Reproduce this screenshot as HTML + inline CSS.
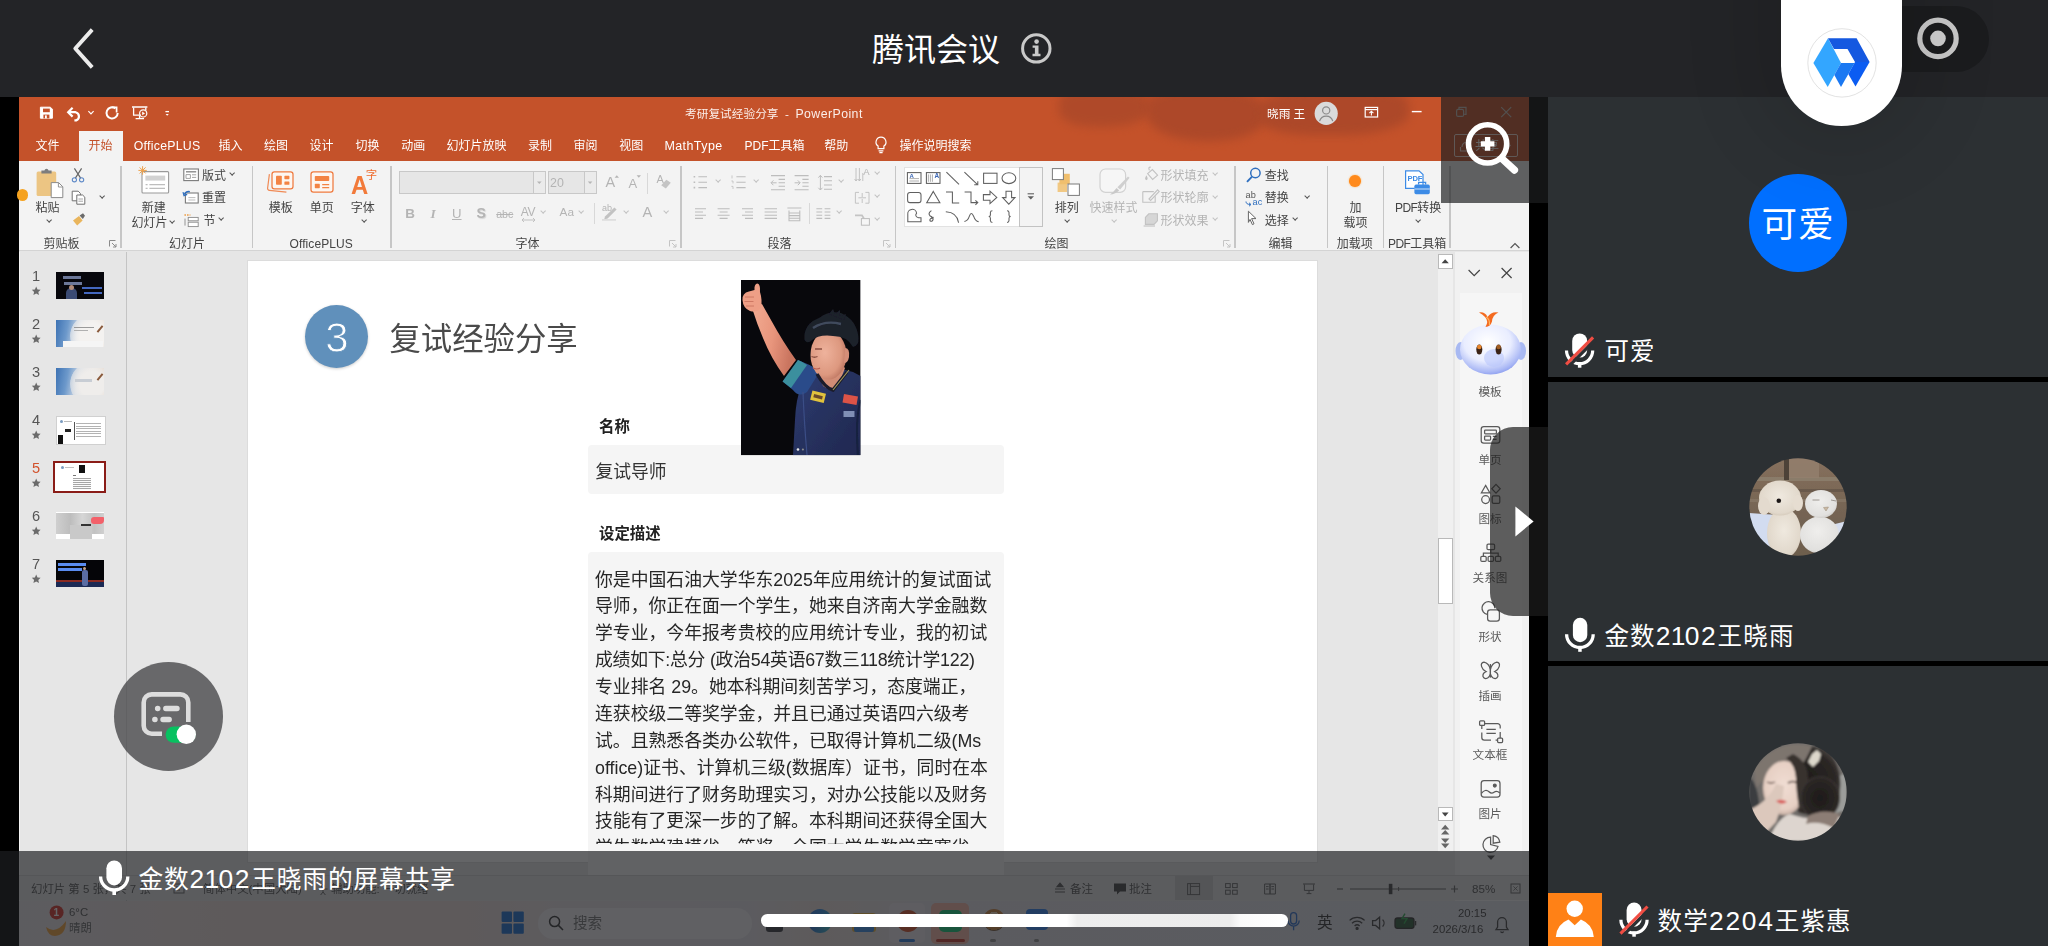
<!DOCTYPE html>
<html lang="zh-CN">
<head>
<meta charset="utf-8">
<title>腾讯会议</title>
<style>
html,body{margin:0;padding:0;background:#000;overflow:hidden;}
html{width:2048px;height:946px;}
body{width:2048px;height:946px;position:relative;overflow:hidden;font-family:"Liberation Sans","Noto Sans CJK SC",sans-serif;color:#fff;}
.a{position:absolute;}
.a,svg{box-sizing:border-box;}
.t{position:absolute;white-space:nowrap;line-height:1;}
svg{position:absolute;overflow:visible;}
/* top bar */
#topbar{left:0;top:0;width:2048px;height:97px;background:#232427;}
/* ppt */
#ppt{left:19px;top:97px;width:1510px;height:849px;background:#e6e6e6;overflow:hidden;color:#333;font-size:11.5px;filter:blur(0.35px);}
#ppt .t{color:#3b3b3b;}
.tab{position:absolute;top:43.4px;color:#fff !important;font-size:12px;white-space:nowrap;line-height:1;}
.sep{position:absolute;top:8px;width:1px;height:82px;background:#c9c9c9;}
.gl{position:absolute;top:79px;font-size:11.5px;color:#444;white-space:nowrap;line-height:1;}
.dis{color:#b4b4b4 !important;}
#rib{left:0;top:63.5px;width:1510px;height:90.5px;background:#f3f3f3;border-bottom:1px solid #d4d4d4;}
#rib .t{font-size:12px;color:#444;padding-top:0.500px;}
#rib .t.dis{color:#b9b9b9;}
.cv{position:absolute;width:3.3px;height:3.3px;border-right:1.25px solid #555;border-bottom:1.25px solid #555;transform:rotate(45deg);}
.cv.dis{border-color:#c2c2c2;}
.sep{position:absolute;top:5px;width:1.2px;height:82.5px;background:#c6c6c6;}
.tsep{position:absolute;width:1px;height:21px;background:#d8d8d8;}
.lau{position:absolute;top:79.5px;width:8px;height:8px;}
.th{position:absolute;left:36.6px;width:48.4px;height:27.4px;overflow:hidden;}
.tn{position:absolute;left:11px;width:12px;text-align:center;font-size:14.600px;color:#555;line-height:1;}
.ts{position:absolute;left:12.6px;width:9px;height:9px;}
.pl{position:absolute;width:72px;left:1435px;text-align:center;font-size:11.600px;color:#5a5a5a;line-height:1;white-space:nowrap;}
#slide .t{color:#2b2b2b;}
/* right panel */
.tile{position:absolute;left:1548px;width:500px;background:#2c3033;}
.nm{position:absolute;white-space:nowrap;line-height:1;color:#fff;font-size:25px;letter-spacing:0.6px;}
</style>
</head>
<body>
<!-- ===== TOP BAR ===== -->
<div id="topbar" class="a">
  <svg style="left:60px;top:20px" width="50" height="60" viewBox="60 20 50 60"><path d="M92.2 29.6 L75.3 48.5 L92.2 67.4" fill="none" stroke="#ececec" stroke-width="3.9" stroke-linejoin="round"/></svg>
  <div class="t" style="left:872px;top:34.300px;font-size:32px;color:#fff;">腾讯会议</div>
  <svg style="left:1018px;top:30px" width="36" height="36" viewBox="0 0 36 36"><circle cx="18.3" cy="18.4" r="13.7" fill="none" stroke="#c9c9c9" stroke-width="3"/><circle cx="18.6" cy="11.6" r="2.3" fill="#c9c9c9"/><path d="M14.6 15.4h5.9v8.4h2v2.4h-8v-2.4h2.4v-6h-2.3z" fill="#c9c9c9"/></svg>
  <!-- record pill -->
  <div class="a" style="left:1860px;top:6px;width:129px;height:66px;border-radius:33px;background:#1b1c1e;"></div>
  <svg style="left:1914px;top:15px" width="48" height="48" viewBox="0 0 48 48"><circle cx="24" cy="23.4" r="18.2" fill="none" stroke="#c9c9c9" stroke-width="5.2"/><circle cx="24" cy="23.4" r="7.8" fill="#cfcfcf"/></svg>
</div>
<!-- ===== SHARED SCREEN : PowerPoint window (origin 19,97) ===== -->
<div id="ppt" class="a">
  <!-- title bar + tab strip -->
  <div class="a" style="left:0;top:0;width:1510px;height:63.5px;background:#c4522a;"></div>
  <div class="a" style="left:1040px;top:-8px;width:92px;height:38px;background:#aa4829;border-radius:30% 40% 50% 40%;filter:blur(5px);opacity:0.800;"></div>
  <div class="a" style="left:1128px;top:-8px;width:118px;height:52px;background:#a94729;border-radius:30% 40% 45% 50%;filter:blur(5px);opacity:0.850;"></div>
  <div class="a" style="left:1240px;top:-8px;width:150px;height:46px;background:#a94729;border-radius:40% 30% 45% 35%;filter:blur(5px);opacity:0.850;"></div>
  <!-- quick access toolbar -->
  <svg style="left:18px;top:6px" width="140" height="22" viewBox="18 6 140 22" fill="none" stroke="#fff" stroke-width="1.5">
    <path d="M21.400 10.200h10l2 2v9h-12z" fill="#fff" stroke-width="1"/><rect x="24" y="11.600" width="6.800" height="3.600" fill="#c4522a" stroke="none"/><rect x="24.400" y="17.600" width="6" height="3.800" fill="#c4522a" stroke="none"/><rect x="26" y="18.400" width="1.800" height="3" fill="#fff" stroke="none"/>
    <path d="M53.600 10.800l-4.400 4.400l4.400 4.400" stroke-width="2.200"/><path d="M49.600 15.200h7a4.300 4.300 0 0 1 0.600 8.200h-1.800" stroke-width="2.200"/>
    <path d="M69.4 14.2l2.6 2.6l2.6 -2.6" stroke-width="1.2"/>
    <path d="M96.4 11.4a5.6 5.6 0 1 0 2.3 4.6" stroke-width="2"/><path d="M92.6 10.4h5v5" stroke-width="1.7"/>
    <path d="M113 10h15.4" stroke-width="1.5"/><path d="M114.6 10.6v7.6h7.4M126.8 10.6v3" stroke-width="1.3"/><circle cx="124.2" cy="16.4" r="3.6" stroke-width="1.2"/><path d="M123.2 14.6v3.6l2.8 -1.8z" fill="#fff" stroke="none"/><path d="M120.6 18.6v2.4M116.6 21.6h8.4" stroke-width="1.4"/>
    <path d="M146.4 14.6h3.6" stroke-width="1.3"/><path d="M146.6 17l1.6 1.8l1.6 -1.8z" fill="#fff" stroke="none"/>
  </svg>
  <div class="t" style="left:666px;top:10.5px;font-size:11.7px;color:#fbeee9 !important;color:#fbeee9;"><span style="color:#fbeee9">考研复试经验分享&nbsp; -&nbsp; <span style="font-size:12.300px;letter-spacing:0.450px;">PowerPoint</span></span></div>
  <div class="t" style="left:1248px;top:10.5px;font-size:11.7px;"><span style="color:#fff">晓雨 王</span></div>
  <svg style="left:1294px;top:3px" width="28" height="28" viewBox="0 0 28 28"><circle cx="13.2" cy="13.4" r="11.6" fill="#dadada"/><circle cx="13.2" cy="10.4" r="3.6" fill="none" stroke="#8a8a8a" stroke-width="1.2"/><path d="M6.6 21.2a6.8 6.8 0 0 1 13.2 0" fill="none" stroke="#8a8a8a" stroke-width="1.2"/></svg>
  <svg style="left:1344px;top:8px" width="170" height="16" viewBox="1344 8 170 16" fill="none" stroke="#fff" stroke-width="1.2">
    <rect x="1346.2" y="10.4" width="12.4" height="9.6"/><path d="M1346.2 12.6h12.4" /><path d="M1352.4 18.6v-4.2M1350.4 16.2l2 -2l2 2" stroke-width="1.1"/>
    <path d="M1392.8 14.6h9.8" stroke-width="1.4"/>
    <g stroke="#c9bdb8"><rect x="1437.6" y="12.4" width="7" height="7" rx="1.5"/><path d="M1440 12v-1.6h7v7h-1.8"/>
    <path d="M1482.2 10.2l10 10M1492.2 10.2l-10 10"/></g>
  </svg>
  <!-- share button (under zoom overlay) -->
  <div class="a" style="left:1434.5px;top:37px;width:64px;height:23px;border:1px solid #f0d8cf;border-radius:2px;"></div>
  <div class="t" style="left:1456px;top:42.5px;font-size:12px;"><span style="color:#fff">共享</span></div>
  <svg style="left:1440px;top:42px" width="14" height="14" viewBox="0 0 14 14" fill="none" stroke="#f4ddd5" stroke-width="1.1"><path d="M1.5 8v4h9v-4M3 8c0-3 2-5 5.6-5M7 0.8l2.4 2.2l-2.4 2.2"/></svg>
  <svg style="left:1484px;top:46px" width="10" height="8" viewBox="0 0 10 8" fill="none" stroke="#f4ddd5" stroke-width="1.1"><path d="M1.5 2l3 3l3 -3"/></svg>
  <!-- tabs -->
  <div class="a" style="left:59.8px;top:34.2px;width:44.4px;height:30px;background:#f3f3f3;"></div>
  <div class="tab" style="left:16.6px;">文件</div>
  <div class="tab" style="left:69.4px;color:#c4522a !important;">开始</div>
  <div class="tab" style="left:114.8px;font-size:12.300px;letter-spacing:0.260px;">OfficePLUS</div>
  <div class="tab" style="left:199.6px;">插入</div>
  <div class="tab" style="left:245px;">绘图</div>
  <div class="tab" style="left:290.6px;">设计</div>
  <div class="tab" style="left:336.6px;">切换</div>
  <div class="tab" style="left:382.2px;">动画</div>
  <div class="tab" style="left:427.6px;">幻灯片放映</div>
  <div class="tab" style="left:509px;">录制</div>
  <div class="tab" style="left:554.6px;">审阅</div>
  <div class="tab" style="left:600.2px;">视图</div>
  <div class="tab" style="left:645.4px;font-size:12.500px;letter-spacing:0.420px;">MathType</div>
  <div class="tab" style="left:725.6px;">PDF工具箱</div>
  <div class="tab" style="left:805.2px;">帮助</div>
  <svg style="left:854px;top:38px" width="16" height="20" viewBox="0 0 16 20" fill="none" stroke="#fff" stroke-width="1.2"><path d="M8 2.2a4.9 4.9 0 0 0 -2.9 8.9v2.6h5.8v-2.6a4.9 4.9 0 0 0 -2.9 -8.9z"/><path d="M5.6 15.8h4.8M6.4 17.6h3.2"/></svg>
  <div class="tab" style="left:880.6px;">操作说明搜索</div>
  <!-- ===== RIBBON ===== -->
  <div id="rib" class="a">
    <!-- group : 剪贴板 -->
    <svg style="left:16px;top:5px" width="30" height="34" viewBox="16 5 30 34">
      <rect x="17.6" y="10.4" width="19.6" height="24.6" rx="1.5" fill="#ecc583"/>
      <path d="M22.4 12.6v-3.2h3a2.2 2.2 0 0 1 4.2 0h3v3.2z" fill="#7d7d7d"/>
      <path d="M32.2 21.6h7.4l4.2 4.2v10.8h-11.6z" fill="#fff" stroke="#8a8a8a" stroke-width="1"/><path d="M39.4 21.8v4.2h4.2" fill="none" stroke="#8a8a8a" stroke-width="0.9"/>
    </svg>
    <div class="t" style="left:16.4px;top:40.6px;">粘贴</div>
    <div class="cv" style="left:27.6px;top:57.4px;"></div>
    <svg style="left:51px;top:5px" width="18" height="62" viewBox="51 5 18 62" fill="none">
      <path d="M55.4 7.4l6.4 10M62.6 7.4l-6.4 10" stroke="#666" stroke-width="1.200"/><circle cx="55.4" cy="18.8" r="2.1" stroke="#5f8ac8" stroke-width="1.100"/><circle cx="62.6" cy="18.8" r="2.1" stroke="#5f8ac8" stroke-width="1.100"/>
      <path d="M53.2 30.2h6l2.2 2.2v7.4h-8.2z" fill="#fff" stroke="#6f6f6f" stroke-width="1"/><path d="M57.8 34h5.8l2.2 2.2v7h-8z" fill="#fff" stroke="#6f6f6f" stroke-width="1"/><path d="M59.4 38h4.6M59.4 40.2h4.6" stroke="#8f8f8f" stroke-width="0.8"/>
      <path d="M54 59.6l6 -4.6l3.6 4.6l-5.4 4.8z" fill="#e9b55c"/><path d="M60.6 54.6l3.4 -2.4l2 2.6l-2.2 3.2z" fill="#6a6a6a"/>
    </svg>
    <div class="cv" style="left:80.6px;top:33.2px;"></div>
    <div class="t" style="left:24.6px;top:76.8px;">剪贴板</div>
    <svg class="lau" style="left:90px;" viewBox="0 0 8 8" fill="none" stroke="#8a8a8a" stroke-width="1"><path d="M0.5 6.5v-6h6"/><path d="M3 3l4 4M7 4v3h-3"/></svg>
    <div class="sep" style="left:101.4px;"></div>

    <!-- group : 幻灯片 -->
    <svg style="left:117px;top:3px" width="36" height="32" viewBox="117 3 36 32" fill="none">
      <rect x="123" y="10.6" width="26.6" height="21.4" rx="1" fill="#fff" stroke="#9a9a9a" stroke-width="1.1"/>
      <rect x="126.4" y="14.6" width="19.8" height="5" fill="#d2d2d2"/><path d="M126.6 23.6h2M130.4 23.6h15.6M126.6 27.4h2M130.4 27.4h15.6" stroke="#bdbdbd" stroke-width="1.1"/>
      <path d="M123.6 5.2v8.4M119.4 9.4h8.4M120.6 6.4l6 6M126.6 6.4l-6 6" stroke="#eda04a" stroke-width="1"/>
    </svg>
    <div class="t" style="left:122.8px;top:40.6px;">新建</div>
    <div class="t" style="left:112.6px;top:56px;">幻灯片</div>
    <div class="cv" style="left:151.4px;top:58.4px;"></div>
    <svg style="left:163px;top:5px" width="18" height="62" viewBox="163 5 18 62" fill="none">
      <rect x="164.8" y="8" width="14.6" height="11.6" fill="#fff" stroke="#7a7a7a" stroke-width="1.1"/><path d="M167 10.8h10.2" stroke="#8a8a8a" stroke-width="1.4"/><path d="M167 13.6h4.4v3.8h-4.4zM173 13.8h4.2M173 16.4h4.2" stroke="#9a9a9a" stroke-width="0.9"/>
      <rect x="166.4" y="32" width="12.8" height="10" fill="#fff" stroke="#7a7a7a" stroke-width="1.1"/><path d="M169.4 36.6h7M169.4 39h7" stroke="#b5b5b5" stroke-width="0.9"/><path d="M170.8 30.8a4.2 4.2 0 0 0 -5.4 2.6" stroke="#2f6fbf" stroke-width="1.5"/><path d="M164 31.2l1 3.4l3.2 -1.2" stroke="#2f6fbf" stroke-width="1.2"/>
      <path d="M165.4 54h6" stroke="#eda04a" stroke-width="1.4" stroke-dasharray="1.6 1"/><rect x="169.2" y="56.4" width="10" height="3.4" fill="#fff" stroke="#8a8a8a" stroke-width="0.9"/><rect x="169.2" y="61.2" width="10" height="4.4" fill="#fff" stroke="#8a8a8a" stroke-width="0.9"/><path d="M166 57.6v7" stroke="#8a8a8a" stroke-width="0.9"/>
    </svg>
    <div class="t" style="left:183px;top:8.6px;">版式</div><div class="cv" style="left:211.4px;top:10.6px;"></div>
    <div class="t" style="left:183px;top:31px;">重置</div>
    <div class="t" style="left:184.4px;top:53.6px;">节</div><div class="cv" style="left:199.8px;top:55.8px;"></div>
    <div class="t" style="left:150px;top:76.8px;">幻灯片</div>
    <div class="sep" style="left:233.2px;"></div>

    <!-- group : OfficePLUS -->
    <svg style="left:246px;top:7px" width="114" height="30" viewBox="246 7 114 30" fill="none">
      <path d="M250.400 13.200l-1.800 14a2 2 0 0 0 1.800 2.200l17 1.800" stroke="#f08a55" stroke-width="1.200"/>
      <rect x="253" y="10.800" width="21" height="17" rx="2.400" fill="#fdf6f1" stroke="#ef7a3f" stroke-width="1.250"/>
      <rect x="257" y="14.800" width="5.800" height="9" rx="0.800" fill="#f38344"/><rect x="265.400" y="14.800" width="5" height="3.400" rx="0.600" fill="#f38344"/><rect x="265.400" y="20.400" width="5" height="3.400" rx="0.600" fill="#f38344"/>
      <rect x="292" y="10.800" width="22" height="20.400" rx="2.400" fill="#fdf6f1" stroke="#ef7a3f" stroke-width="1.250"/>
      <rect x="295.800" y="15" width="14.400" height="5" rx="0.800" fill="#f38344"/><rect x="295.800" y="22.800" width="5" height="4.400" rx="0.600" fill="#f38344"/><path d="M303.200 23.600h7M303.200 26.600h7" stroke="#f38344" stroke-width="1.150"/>
    </svg>
    <div class="t" style="left:332.400px;top:11px;font-size:26px;font-weight:bold;transform:scaleX(0.920);transform-origin:left top;"><span style="color:#f27a3a;">A</span></div>
    <div class="t" style="left:346.800px;top:9px;font-size:11.400px;"><span style="color:#ee6b2d;">字</span></div>
    <div class="t" style="left:249.8px;top:40.6px;">模板</div>
    <div class="t" style="left:290.8px;top:40.6px;">单页</div>
    <div class="t" style="left:331.8px;top:40.6px;">字体</div>
    <div class="cv" style="left:342.6px;top:57.4px;"></div>
    <div class="t" style="left:270.600px;top:76.8px;letter-spacing:0.080px;">OfficePLUS</div>
    <div class="sep" style="left:371.4px;"></div>
    <!-- group : 字体 (disabled look) -->
    <div class="a" style="left:380px;top:10.6px;width:146.8px;height:22.6px;background:#e6e6e6;border:1px solid #c8c8c8;"></div>
    <div class="a" style="left:513.6px;top:10.6px;width:13.2px;height:22.6px;border:1px solid #c8c8c8;background:#ebebeb;"></div>
    <div class="a" style="left:528.6px;top:10.6px;width:49px;height:22.6px;background:#e6e6e6;border:1px solid #c8c8c8;"></div>
    <div class="a" style="left:564.6px;top:10.6px;width:13px;height:22.6px;border:1px solid #c8c8c8;background:#ebebeb;"></div>
    <div class="t dis" style="left:531px;top:15.6px;font-size:12.4px;">20</div>
    <svg style="left:516px;top:19px" width="60" height="6" viewBox="516 19 60 6"><path d="M518 20.4h4.6l-2.3 2.6z" fill="#b5b5b5"/><path d="M568.8 20.4h4.6l-2.3 2.6z" fill="#b5b5b5"/></svg>
    <div class="t dis" style="left:586.4px;top:14.4px;font-size:14.5px;">A</div><svg style="left:594.5px;top:13px" width="6" height="5" viewBox="0 0 6 5"><path d="M0.6 3.8l2.2 -2.6l2.2 2.6z" fill="#b5b5b5"/></svg>
    <div class="t dis" style="left:609.4px;top:15.6px;font-size:13px;">A</div><svg style="left:616.6px;top:13.6px" width="6" height="5" viewBox="0 0 6 5"><path d="M0.6 1.2l2.2 2.6l2.2 -2.6z" fill="#b5b5b5"/></svg>
    <div class="tsep" style="left:628.4px;top:12px;"></div>
    <div class="t dis" style="left:637.6px;top:13.4px;font-size:11px;">A</div>
    <svg style="left:640px;top:17px" width="14" height="12" viewBox="0 0 14 12"><path d="M2.2 7.2l5.2 -5.4l4.4 3l-5 5.6z" fill="#c4c4c4"/></svg>
    <div class="t dis" style="left:386.2px;top:45.6px;font-size:13.4px;font-weight:bold;">B</div>
    <div class="t dis" style="left:411.4px;top:45.6px;font-size:13.4px;font-style:italic;font-family:'Liberation Serif',serif;font-weight:bold;">I</div>
    <div class="t dis" style="left:433px;top:45.6px;font-size:13.2px;text-decoration:underline;">U</div>
    <div class="t dis" style="left:457.6px;top:45.2px;font-size:14px;font-weight:bold;text-shadow:1px 1px 1px #d4d4d4;">S</div>
    <div class="t dis" style="left:477.2px;top:47.6px;font-size:10.6px;text-decoration:line-through;">abc</div>
    <div class="t dis" style="left:501.8px;top:44.6px;font-size:12px;letter-spacing:-0.4px;">AV</div>
    <svg style="left:502px;top:56px" width="16" height="6" viewBox="0 0 16 6" fill="none" stroke="#bcbcbc" stroke-width="0.9"><path d="M1 3h13M3 1l-2 2l2 2M12 1l2 2l-2 2"/></svg>
    <div class="cv dis" style="left:522.4px;top:48.6px;"></div>
    <div class="t dis" style="left:540.6px;top:46.2px;font-size:11.8px;">Aa</div>
    <div class="cv dis" style="left:560px;top:48.6px;"></div>
    <div class="tsep" style="left:575.4px;top:42px;"></div>
    <div class="t dis" style="left:583px;top:43.4px;font-size:9px;">ab</div>
    <svg style="left:582px;top:44px" width="18" height="16" viewBox="0 0 18 16"><path d="M4 11.4l9.4 -9l2.2 2l-9 9.2l-3.4 0.8z" fill="#c2c2c2"/><rect x="1" y="14" width="14" height="1.8" fill="#dedede"/></svg>
    <div class="cv dis" style="left:605.4px;top:48.6px;"></div>
    <div class="t dis" style="left:623.4px;top:43.8px;font-size:14.6px;">A</div>
    <div class="cv dis" style="left:644.6px;top:48.6px;"></div>
    <div class="t" style="left:496.4px;top:76.8px;">字体</div>
    <svg class="lau" style="left:650.4px;" viewBox="0 0 8 8" fill="none" stroke="#c4c4c4" stroke-width="1"><path d="M0.5 6.5v-6h6"/><path d="M3 3l4 4M7 4v3h-3"/></svg>
    <div class="sep" style="left:661.4px;"></div>

    <!-- group : 段落 (disabled look) -->
    <svg style="left:672px;top:4px" width="200" height="66" viewBox="672 4 200 66" fill="none" stroke="#bdbdbd" stroke-width="1.1">
      <path d="M679.4 15.8h8.6M679.4 21.2h8.6M679.4 26.6h8.6"/><path d="M674.6 15.8h1.6M674.6 21.2h1.6M674.6 26.6h1.6" stroke-width="1.6"/>
      <path d="M717.4 15.8h9.2M717.4 21.2h9.2M717.4 26.6h9.2"/><path d="M713 14.4v3M712.4 20h1.6v2.4M712.4 25.4h1.6v2.6" stroke-width="0.8"/>
      <path d="M752 14.6h14M759.6 18.4h6.4M759.6 21.8h6.4M759.6 25.2h6.4M752 28.8h14"/><path d="M757.6 21.8h-5.4M754.4 19.4l-2.4 2.4l2.4 2.4" stroke-width="1"/>
      <path d="M775.6 14.6h14M783.4 18.4h6.2M783.4 21.8h6.2M783.4 25.2h6.2M775.6 28.8h14"/><path d="M775.6 21.8h5.4M778.8 19.4l2.4 2.4l-2.4 2.4" stroke-width="1"/>
      <path d="M805 15.6h8M805 19.8h8M805 24h8M805 28.200h8"/><path d="M801.400 14.400v14.600M799.400 16.600l2 -2.200l2 2.200M799.400 26.800l2 2.200l2 -2.200" stroke-width="1"/>
      <path d="M676 47.800h11M676 51h8M676 54.200h11M676 57.400h8"/>
      <path d="M698.600 47.800h12M700.600 51h8M698.600 54.200h12M700.600 57.400h8"/>
      <path d="M723 47.800h11M726 51h8M723 54.200h11M726 57.400h8"/>
      <path d="M745.600 47.800h12.400M745.600 51h12.400M745.600 54.200h12.400M745.600 57.400h12.400"/>
      <path d="M768.400 47h14M770 49.600v10.200h10.800v-10.200M770 52h10.800M770 54.600h10.800M770 57.200h10.800"/>
      <path d="M797.400 47.800h5.800M797.400 51h5.800M797.400 54.200h5.800M797.400 57.400h5.800M805.600 47.800h5.800M805.600 51h5.800M805.600 54.200h5.800M805.600 57.400h5.800"/>
      <path d="M837 7v13M840.400 7v13M843.800 12v8M835.600 18l1.400 2l1.400 -2M839 18l1.400 2l1.400 -2" stroke-width="0.9"/>
      <path d="M836.400 31.400h3.600M846.400 31.400h3.600v10.800h-3.600M840 42.200h-3.600v-10.800M839.400 36.800h7.600M843.200 32v4M843.200 38v4" stroke-width="0.9"/>
      <path d="M836 54.400h7l2 3.400" stroke-width="1.8" stroke="#c4c4c4"/><rect x="842.400" y="57.600" width="8" height="6.600" stroke-width="1" fill="#f6f6f6"/>
    </svg>
    <div class="t dis" style="left:844.2px;top:5.6px;font-size:9.5px;">A</div>
    <div class="cv dis" style="left:696.6px;top:17.6px;"></div><div class="cv dis" style="left:735.4px;top:17.6px;"></div><div class="cv dis" style="left:820px;top:17.6px;"></div>
    <div class="cv dis" style="left:856.4px;top:9.6px;"></div><div class="cv dis" style="left:856.4px;top:32.4px;"></div><div class="cv dis" style="left:856.4px;top:55.2px;"></div>
    <div class="tsep" style="left:790px;top:42px;"></div>
    <div class="cv dis" style="left:817.6px;top:48.6px;"></div>
    <div class="t" style="left:748.4px;top:76.8px;">段落</div>
    <svg class="lau" style="left:864.4px;" viewBox="0 0 8 8" fill="none" stroke="#c4c4c4" stroke-width="1"><path d="M0.5 6.5v-6h6"/><path d="M3 3l4 4M7 4v3h-3"/></svg>
    <div class="sep" style="left:876px;"></div>
    <!-- group : 绘图 -->
    <div class="a" style="left:885.4px;top:6.2px;width:115.4px;height:60.4px;background:#fff;border:1px solid #e2e2e2;"></div>
    <div class="a" style="left:1000.4px;top:6.2px;width:23.4px;height:60.4px;border:1px solid #c2c2c2;background:#f3f3f3;"></div>
    <svg style="left:886px;top:7px" width="136" height="59" viewBox="886 7 136 59" fill="none" stroke="#5f5f5f" stroke-width="1.05">
      <rect x="888.400" y="11.600" width="13.600" height="10.800"/><path d="M890.400 17.600h9.600M890.400 20h9.600" stroke="#9a9a9a" stroke-width="0.8"/>
      <rect x="907.400" y="11.600" width="13.600" height="10.800"/><path d="M909.400 13.400v7.400M911.400 13.400v7.400M913.400 13.400v7.400" stroke="#9a9a9a" stroke-width="0.8"/>
      <path d="M927.400 11.200l12.600 12.200"/>
      <path d="M945.400 11.200l13.400 12.600M958.800 20.200v3.600h-3.600"/>
      <rect x="964.600" y="12.200" width="13.400" height="10.200"/>
      <ellipse cx="989.900" cy="17.200" rx="6.900" ry="5.400"/>
      <rect x="888.600" y="31.400" width="13.400" height="10.200" rx="2.400"/>
      <path d="M914.300 30.400l6.600 11.400h-13.200z"/>
      <path d="M927 31h6.400v11h6.800"/>
      <path d="M945.600 31h6.400v10.600h6.600M956.400 39.400l2.400 2.200l-2.400 2.200"/>
      <path d="M964.400 33.600h6.600v-3.400l6.800 6.200l-6.800 6.200v-3.400h-6.600z"/>
      <path d="M987 30.200h5.600v6.400h3.400l-6.200 6.600l-6.200 -6.600h3.400z"/>
      <path d="M888.800 60.800v-7.400a4.400 4.400 0 0 1 8.800 -1.200q-2.400 3 2 4.600h2.400v4z"/>
      <path d="M912.400 49.600q-4 3 -1.200 5.400q3.400 1.400 2.800 3.800q-1 2.400 -3 1q-1 -2 3.600 -3.400" stroke-width="1.1"/>
      <path d="M926.800 50.800q11.400 0.600 12.800 11"/>
      <path d="M945.400 60.400q3.400 -0.400 5 -5.200q1.800 -5.600 4.200 0q1.800 5.400 5 5.400"/>
      <path d="M973.400 49.800q-2 0 -2 1.800v2.400q0 1.400 -1.600 1.600q1.600 0.200 1.600 1.600v2.400q0 1.800 2 1.800"/>
      <path d="M988 49.800q2 0 2 1.800v2.400q0 1.400 1.600 1.600q-1.600 0.200 -1.600 1.600v2.400q0 1.800 -2 1.800"/>
      <path d="M1008.600 32.800h6.400" stroke-width="1.100"/><path d="M1008.600 35.200h6.400l-3.200 3.400z" fill="#5f5f5f" stroke="none"/>
    </svg>
    <div class="t" style="left:890.400px;top:12.400px;font-size:6px;font-weight:bold;"><span style="color:#3b67b5;">A</span></div>
    <div class="t" style="left:915.600px;top:12.400px;font-size:6.400px;font-weight:bold;"><span style="color:#3b67b5;">A</span></div>
    <svg style="left:1030px;top:5px" width="34" height="32" viewBox="1030 5 34 32">
      <rect x="1040.400" y="12.800" width="10.400" height="10.400" fill="#f0bf6e"/><rect x="1038.600" y="21.600" width="9.400" height="9.400" fill="#f0bf6e" opacity="0.85"/>
      <rect x="1033.400" y="7.600" width="11" height="11" fill="#fff" stroke="#7a7a7a" stroke-width="1"/><rect x="1049" y="23" width="11.400" height="11.400" fill="#fff" stroke="#7a7a7a" stroke-width="1"/>
    </svg>
    <div class="t" style="left:1035.800px;top:40.600px;">排列</div>
    <div class="cv" style="left:1046.400px;top:57.400px;"></div>
    <svg style="left:1078px;top:6px" width="36" height="32" viewBox="1078 6 36 32" fill="none">
      <rect x="1081" y="8" width="25.600" height="23.400" rx="5.500" stroke="#d2d2d2" stroke-width="1.200" fill="#f6f6f6"/>
      <path d="M1091 33.600q3.600 -2.600 6.600 -6.600l2.600 2.400q-3.600 3.600 -9.200 4.200z" fill="#c9c9c9"/><path d="M1098.400 26.200l10.600 -10.800l1.600 1.400l-9.400 11.800z" fill="#cfcfcf"/>
    </svg>
    <div class="t dis" style="left:1070.400px;top:40.600px;">快速样式</div>
    <div class="cv dis" style="left:1092.800px;top:57.400px;"></div>
    <svg style="left:1122px;top:5px" width="20" height="62" viewBox="1122 5 20 62" fill="none" stroke="#c2c2c2" stroke-width="1.100">
      <path d="M1128.600 12.600l4.800 -4l5.200 5.600l-5 4.200z"/><path d="M1130.400 9.400q-1.600 -3.600 1.400 -3.200"/><path d="M1127.400 15.400q-1.400 2.600 0 3.200q1.400 -0.600 0 -3.200z" fill="#c2c2c2"/>
      <path d="M1123.800 30.600h11M1123.800 30.600v10.600h12.400v-6"/><path d="M1130 38l8.600 -9.200l1.600 1.600l-8.600 9z" />
      <path d="M1126.400 56.400l3.400 -3.600h8.600v7l-3.400 3.600h-8.600z" fill="#d6d6d6"/><path d="M1124.600 65h11.400" stroke-width="1.600" stroke="#d0d0d0"/>
    </svg>
    <div class="t dis" style="left:1141.400px;top:8.600px;">形状填充</div><div class="cv dis" style="left:1193.600px;top:10.600px;"></div>
    <div class="t dis" style="left:1141.400px;top:31px;">形状轮廓</div><div class="cv dis" style="left:1193.600px;top:33.200px;"></div>
    <div class="t dis" style="left:1141.400px;top:53.600px;">形状效果</div><div class="cv dis" style="left:1193.600px;top:55.800px;"></div>
    <div class="t" style="left:1025.400px;top:76.800px;">绘图</div>
    <svg class="lau" style="left:1204px;" viewBox="0 0 8 8" fill="none" stroke="#c4c4c4" stroke-width="1"><path d="M0.500 6.500v-6h6"/><path d="M3 3l4 4M7 4v3h-3"/></svg>
    <div class="sep" style="left:1215.400px;"></div>

    <!-- group : 编辑 -->
    <svg style="left:1224px;top:4px" width="22" height="64" viewBox="1224 4 22 64" fill="none">
      <circle cx="1236.400" cy="12" r="4.700" stroke="#2f6fbf" stroke-width="1.500"/><path d="M1233 15.600l-5 5.200" stroke="#2f6fbf" stroke-width="1.900"/>
      <path d="M1229.400 61.400v-11.200l7.600 7.400h-4.400l2.400 5.200l-1.600 0.800l-2.400 -5.200z" stroke="#666" stroke-width="1" fill="#fff"/>
    </svg>
    <div class="t" style="left:1226.600px;top:30px;font-size:9.200px;"><span style="color:#555;">ab</span></div>
    <div class="t" style="left:1233.600px;top:37.400px;font-size:9.200px;"><span style="color:#2f6fbf;">ac</span></div>
    <svg style="left:1226px;top:39px" width="8" height="8" viewBox="0 0 8 8" fill="none" stroke="#2f6fbf" stroke-width="1"><path d="M1 1.500q0 3 4.500 3M4 2.800l2 1.700l-2 1.700"/></svg>
    <div class="t" style="left:1245.800px;top:8.600px;">查找</div>
    <div class="t" style="left:1245.800px;top:31px;">替换</div><div class="cv" style="left:1286.400px;top:33.200px;"></div>
    <div class="t" style="left:1245.800px;top:53.600px;">选择</div><div class="cv" style="left:1274px;top:55.800px;"></div>
    <div class="t" style="left:1249.400px;top:76.800px;">编辑</div>
    <div class="sep" style="left:1308px;"></div>

    <!-- group : 加载项 -->
    <div class="a" style="left:1330.200px;top:14.800px;width:11.600px;height:11.600px;border-radius:50%;background:#ff8a1c;box-shadow:0 0 2px #ffb25e;"></div>
    <div class="t" style="left:1330.600px;top:41.200px;">加</div>
    <div class="t" style="left:1324.600px;top:56px;">载项</div>
    <div class="t" style="left:1317.800px;top:76.800px;">加载项</div>
    <div class="sep" style="left:1364.200px;"></div>

    <!-- group : PDF工具箱 -->
    <svg style="left:1384px;top:7px" width="30" height="30" viewBox="1384 7 30 30" fill="none">
      <path d="M1386.600 9.800h13.400l4 3.800v13.800h-17.400z" fill="#fff" stroke="#3c8be6" stroke-width="1.200"/>
      <rect x="1395.400" y="23.600" width="15.400" height="9.600" rx="1.600" fill="#3c8be6"/><path d="M1399.600 23.400v-2h7v2" stroke="#3c8be6" stroke-width="1.300"/><path d="M1395.400 28h15.400" stroke="#dbeafb" stroke-width="0.900"/>
    </svg>
    <div class="t" style="left:1388.600px;top:14px;font-size:7.600px;font-weight:bold;letter-spacing:-0.200px;"><span style="color:#3c8be6;">PDF</span></div>
    <div class="t" style="left:1376px;top:40.600px;"><span style="letter-spacing:-0.55px;">PDF</span>转换</div>
    <div class="cv" style="left:1396.800px;top:57.400px;"></div>
    <div class="t" style="left:1369px;top:76.800px;"><span style="letter-spacing:-0.55px;">PDF</span>工具箱</div>
    <div class="sep" style="left:1430.400px;"></div>
    <svg style="left:1490px;top:81px" width="12" height="8" viewBox="0 0 12 8" fill="none" stroke="#555" stroke-width="1.200"><path d="M1.600 6l4.400 -4.400l4.400 4.400"/></svg>
  </div><!-- /#rib -->
  <!-- ===== thumbnails pane ===== -->
  <div class="a" style="left:0;top:155px;width:108px;height:700px;border-right:1px solid #c4c4c4;border-left:1px solid #f4f4f4;"></div>
  <div class="tn" style="top:172.1px;">1</div><div class="tn" style="top:220.1px;">2</div><div class="tn" style="top:268.1px;">3</div><div class="tn" style="top:316.1px;">4</div>
  <div class="tn" style="top:364.1px;color:#d2522c;">5</div><div class="tn" style="top:412.1px;">6</div><div class="tn" style="top:460.1px;">7</div>
  <svg style="left:11px;top:188px" width="14" height="300" viewBox="0 0 14 300" fill="#6b6b6b">
    <path id="st" d="M6.200 1.600l1.300 2.900l3.100 0.300l-2.300 2.100l0.700 3.100l-2.800 -1.600l-2.800 1.600l0.700 -3.100l-2.300 -2.100l3.100 -0.300z"/>
    <path d="M6.200 49.600l1.300 2.900l3.100 0.300l-2.300 2.100l0.700 3.100l-2.800 -1.600l-2.800 1.600l0.700 -3.100l-2.300 -2.100l3.100 -0.300z"/>
    <path d="M6.200 97.600l1.300 2.900l3.100 0.300l-2.300 2.100l0.700 3.100l-2.800 -1.600l-2.800 1.600l0.700 -3.100l-2.300 -2.100l3.100 -0.300z"/>
    <path d="M6.200 145.600l1.300 2.900l3.100 0.300l-2.300 2.100l0.700 3.100l-2.800 -1.600l-2.800 1.600l0.700 -3.100l-2.300 -2.100l3.100 -0.300z"/>
    <path d="M6.200 193.600l1.300 2.900l3.100 0.300l-2.300 2.100l0.700 3.100l-2.800 -1.600l-2.800 1.600l0.700 -3.100l-2.300 -2.100l3.100 -0.300z"/>
    <path d="M6.200 241.600l1.300 2.900l3.100 0.300l-2.300 2.100l0.700 3.100l-2.800 -1.600l-2.800 1.600l0.700 -3.100l-2.300 -2.100l3.100 -0.300z"/>
    <path d="M6.200 289.600l1.300 2.900l3.100 0.300l-2.300 2.100l0.700 3.100l-2.800 -1.600l-2.800 1.600l0.700 -3.100l-2.300 -2.100l3.100 -0.300z"/>
  </svg>
  <!-- thumb 1 -->
  <div class="th" style="top:175px;background:#07070c;">
    <div class="a" style="left:7px;top:4px;width:18px;height:3px;background:#8f9fc8;opacity:.75"></div><div class="a" style="left:8px;top:10px;width:18px;height:3px;background:#8f9fc8;opacity:.75"></div>
    <div class="a" style="left:26px;top:15px;width:20px;height:2px;background:#4468c0;"></div><div class="a" style="left:28px;top:19.500px;width:18px;height:2px;background:#4468c0;"></div>
    <div class="a" style="left:10px;top:16px;width:11px;height:12px;border-radius:5px 5px 0 0;background:#3b4b74;"></div><div class="a" style="left:13px;top:13px;width:5px;height:5px;border-radius:50%;background:#b08b78;"></div>
  </div>
  <!-- thumb 2 -->
  <div class="th" style="top:223px;background:linear-gradient(100deg,#3d72b3 0%,#6d99cb 24%,#cdd8e6 46%,#ece8e4 70%,#e0cbb8 100%);">
    <div class="a" style="left:14px;top:-6px;width:44px;height:44px;border-radius:50%;background:radial-gradient(circle,#f4f2f0 40%,rgba(240,238,236,0.600) 70%,rgba(255,255,255,0) 72%);"></div>
    <div class="a" style="left:7px;top:20.500px;width:40px;height:6px;background:#f5f5f5;"></div>
    <div class="a" style="left:18px;top:7px;width:20px;height:1px;background:#9a9a9a;"></div><div class="a" style="left:18px;top:10px;width:14px;height:1px;background:#b0b0b0;"></div>
    <div class="a" style="left:40px;top:8px;width:8px;height:2px;background:#8a5a3c;transform:rotate(-50deg);"></div>
  </div>
  <!-- thumb 3 -->
  <div class="th" style="top:271px;background:linear-gradient(100deg,#3d72b3 0%,#6d99cb 24%,#c9d5e4 46%,#e8e2dd 70%,#dcc1aa 100%);">
    <div class="a" style="left:14px;top:-6px;width:44px;height:44px;border-radius:50%;background:radial-gradient(circle,#efedeb 40%,rgba(236,234,232,0.600) 70%,rgba(255,255,255,0) 72%);"></div>
    <div class="a" style="left:19px;top:11px;width:17px;height:3px;background:#c8cdd4;"></div>
    <div class="a" style="left:40px;top:8px;width:8px;height:2px;background:#8a5a3c;transform:rotate(-50deg);"></div>
  </div>
  <!-- thumb 4 -->
  <div class="th" style="top:319px;background:#fff;border:0.500px solid #d0d0d0;">
    <div class="a" style="left:1px;top:18px;width:5px;height:9px;background:#111;"></div><div class="a" style="left:8px;top:12px;width:6px;height:3px;background:#222;"></div>
    <div class="a" style="left:3px;top:3px;width:3px;height:3px;border-radius:50%;background:#7b9cc0;"></div><div class="a" style="left:7px;top:3.500px;width:8px;height:1.500px;background:#bbb;"></div>
    <div class="a" style="left:19px;top:6px;width:25px;height:16px;background:repeating-linear-gradient(180deg,#9a9a9a 0 1px,#fff 1px 2.600px);opacity:.75"></div>
    <div class="a" style="left:17px;top:5px;width:1px;height:18px;background:#555;"></div>
  </div>
  <!-- thumb 5 (selected) -->
  <div class="a" style="left:34.200px;top:363.800px;width:53.200px;height:32.600px;border:2.200px solid #8a1c17;background:#fff;"></div>
  <div class="a" style="left:42px;top:369px;width:3px;height:3px;border-radius:50%;background:#7b9cc0;"></div><div class="a" style="left:46px;top:369.500px;width:9px;height:1.500px;background:#c2c2c2;"></div>
  <div class="a" style="left:60px;top:367.500px;width:5.500px;height:8px;background:#111;"></div>
  <div class="a" style="left:54px;top:378px;width:3px;height:1.200px;background:#777;"></div>
  <div class="a" style="left:53.500px;top:381px;width:18px;height:11.500px;background:repeating-linear-gradient(180deg,#8f8f8f 0 0.900px,#fafafa 0.900px 2px);opacity:.8"></div>
  <!-- thumb 6 -->
  <div class="th" style="top:415px;background:#fff;">
    <div class="a" style="left:0;top:1px;width:48.400px;height:21px;background:linear-gradient(90deg,#cfcfcf,#bdbdbd 30%,#d6d6d6 55%,#c2c2c2 80%,#d0d0d0);"></div>
    <div class="a" style="left:14px;top:13px;width:22px;height:14px;background:#c9c9c9;"></div>
    <div class="a" style="left:35px;top:5px;width:13px;height:7px;border-radius:3px 1px 4px 3px;background:#f3616a;"></div>
    <div class="a" style="left:25px;top:12px;width:10px;height:1.500px;background:#333;"></div>
  </div>
  <!-- thumb 7 -->
  <div class="th" style="top:463px;background:#050508;">
    <div class="a" style="left:2px;top:3px;width:28px;height:3px;background:#5a8cf0;"></div><div class="a" style="left:2px;top:8px;width:24px;height:3px;background:#5a8cf0;"></div>
    <div class="a" style="left:0;top:20px;width:48.400px;height:2px;background:#8a2a22;"></div><div class="a" style="left:0;top:22px;width:48.400px;height:5.400px;background:#1b2a55;"></div>
    <div class="a" style="left:26px;top:10px;width:6px;height:16px;background:#5a6da4;border-radius:2px;"></div><div class="a" style="left:27.500px;top:7px;width:3px;height:3px;border-radius:50%;background:#c9a48c;"></div>
  </div>

  <!-- ===== slide ===== -->
  <div id="slide" class="a" style="left:229px;top:164px;width:1069px;height:601px;background:#fff;box-shadow:0 0 0 1px #dcdcdc;">
    <div class="a" style="left:57px;top:43.600px;width:63px;height:63px;border-radius:50%;background:#6090bb;box-shadow:0 1px 3px rgba(0,0,0,0.200);"></div>
    <div class="t" style="left:77.200px;top:55.600px;font-size:42px;-webkit-text-stroke:0.900px #6090bb;"><span style="color:#fff;">3</span></div>
    <div class="t" style="left:141.400px;top:62.600px;font-size:31.400px;font-weight:400;"><span style="color:#4a4a4a;">复试经验分享</span></div>
    <!-- cards -->
    <div class="t" style="left:351px;top:158px;font-size:15.400px;font-weight:bold;"><span style="color:#222;">名称</span></div>
    <div class="a" style="left:339.600px;top:184.100px;width:416.400px;height:48.900px;border-radius:4px;background:#f5f5f5;"></div>
    <div class="t" style="left:347.400px;top:203.400px;font-size:17.800px;"><span style="color:#333;">复试导师</span></div>
    <div class="t" style="left:351px;top:264.600px;font-size:15.400px;font-weight:bold;"><span style="color:#222;">设定描述</span></div>
    <div class="a" style="left:339.600px;top:290.600px;width:416.400px;height:331.200px;border-radius:4px;background:#f5f5f5;"></div>
    <div class="a" style="left:347px;top:305.600px;width:420px;height:277.400px;overflow:hidden;">
      <div class="t" style="left:0;top:0;font-size:17.840px;line-height:26.880px;"><span style="color:#262626;">你是中国石油大学华东2025年应用统计的复试面试<br>导师，你正在面一个学生，她来自济南大学金融数<br>学专业，今年报考贵校的应用统计专业，我的初试<br><span style="letter-spacing:-0.25px;">成绩如下:总分 (政治54英语67数三118统计学122)</span><br>专业排名 29。她本科期间刻苦学习，态度端正，<br>连获校级二等奖学金，并且已通过英语四六级考<br>试。且熟悉各类办公软件，已取得计算机二级(Ms<br>office)证书、计算机三级(数据库）证书，同时在本<br>科期间进行了财务助理实习，对办公技能以及财务<br>技能有了更深一步的了解。本科期间还获得全国大<br>学生数学建模省一等奖，全国大学生数学竞赛省</span></div>
    </div>
    <!-- photo -->
    <svg style="left:492.900px;top:18.900px" width="119.600" height="175.300" viewBox="0 0 119.600 175.300">
      <defs><clipPath id="ph"><rect x="0" y="0" width="119.600" height="175.300"/></clipPath>
      <linearGradient id="skin" x1="0" y1="0" x2="1" y2="0.300"><stop offset="0" stop-color="#f2ab92"/><stop offset="0.550" stop-color="#e8957c"/><stop offset="1" stop-color="#c9745f"/></linearGradient>
      <linearGradient id="shirt" x1="0" y1="0" x2="1" y2="1"><stop offset="0" stop-color="#2e3f78"/><stop offset="0.500" stop-color="#27315e"/><stop offset="1" stop-color="#1f2850"/></linearGradient>
      <radialGradient id="fc" cx="40%" cy="45%" r="65%"><stop offset="0" stop-color="#eeb29c"/><stop offset="0.700" stop-color="#dd987f"/><stop offset="1" stop-color="#b8705c"/></radialGradient>
      <filter id="soft" x="-5%" y="-5%" width="110%" height="110%"><feGaussianBlur stdDeviation="0.700"/></filter></defs>
      <g clip-path="url(#ph)">
        <rect width="119.600" height="175.300" fill="#08080c"/>
        <g filter="url(#soft)">
        <!-- torso -->
        <path d="M52 175.300 L54 140 Q55 118 60 108 L66 92 Q80 84 96 88 L112 92 L119.600 96 L119.600 175.300z" fill="url(#shirt)"/>
        <!-- sleeve -->
        <path d="M41.600 101.400 L57 80 Q68 84 79 91 L66 112 Q58 118 52 110z" fill="#2c4c8a"/>
        <path d="M41.600 101.400 L57 80 Q62 82 66 85 L50 108z" fill="#3b8f9e"/>
        <!-- arm + fist -->
        <path d="M12 31 Q10 26 21 24 L30 40 Q42 62 55 80 L43 96 Q30 78 22 58 Q16 44 12 31z" fill="url(#skin)"/>
        <path d="M1.500 20 Q1 13 8 11.500 L13.500 10 Q13 4 16.500 3.500 Q19.500 4 19 12 Q21.500 20 20 28 Q16 33 9 31 Q2 28 1.500 20z" fill="#ee9f86"/>
        <path d="M4 17h9M3.500 21.500h9M5 26h8" stroke="#c9745f" stroke-width="0.900" fill="none"/>
        <!-- neck -->
        <path d="M78 92 L82 106 Q90 112 98 104 L104 88 L96 80 L82 82z" fill="#d28d76"/>
        <!-- face -->
        <ellipse cx="87.500" cy="75" rx="18" ry="24.500" fill="url(#fc)"/>
        <path d="M104 68 q5 0 4 9 q-1 6 -5 6z" fill="#d58e78"/>
        <!-- hair -->
        <path d="M63.500 60 Q62 44 78 38 Q88 30 100 33 Q116 40 117.500 58 Q118 66 112 67 Q106 56 92 56 Q78 54 70 61 Q66 64 63.500 60z" fill="#1c202b"/>
        <path d="M88 34 l4 -5 l2 5 l5 -4 l0 6 l6 -2 l-2 6z" fill="#1c202b"/>
        <path d="M72 48 Q84 40 100 44" stroke="#4b566a" stroke-width="2.400" fill="none" opacity=".8"/>
        <path d="M74 69h7M70.500 76.500q3 1.500 6 0" stroke="#8a4f40" stroke-width="1.300" fill="none"/>
        <path d="M72 88q4 2 7 0" stroke="#b85b50" stroke-width="1.200" fill="none"/>
        <!-- collar -->
        <path d="M76 94 Q84 108 92 110 L106 92" fill="none" stroke="#1a1d2c" stroke-width="3.400"/>
        <path d="M92 110 L108 90" fill="none" stroke="#a89a5a" stroke-width="1.100"/>
        <!-- badges -->
        <rect x="70" y="112" width="14" height="9.500" fill="#e1c23c" transform="rotate(14 77 117)"/><rect x="72.500" y="115" width="9" height="3.400" fill="#6b4a2a" transform="rotate(14 77 117)"/>
        <path d="M103 114 l14 2.500 l-1.500 8.500 l-14 -2.500z" fill="#dc5346"/>
        <path d="M102.500 131 h11 v6 h-11z" fill="#9fb0d4" opacity=".75"/>
        <path d="M62 112 Q63 140 66 175" stroke="#3b4e86" stroke-width="1.200" fill="none"/>
        <path d="M119.600 120 Q114 140 117 175" stroke="#18203f" stroke-width="2" fill="none"/>
        </g>
        <circle cx="57" cy="169.500" r="1.300" fill="#e4e4e4"/><circle cx="61.900" cy="169.500" r="1.100" fill="#8a8a8a"/>
      </g>
    </svg>
  </div>

  <!-- ===== vertical scrollbar ===== -->
  <div class="a" style="left:1418.600px;top:156.500px;width:15px;height:598px;background:#f0f0f0;"></div>
  <div class="a" style="left:1418.600px;top:156.800px;width:15px;height:14.800px;background:#fff;border:1px solid #b9b9b9;"></div>
  <div class="a" style="left:1418.600px;top:441.400px;width:15px;height:66px;background:#fff;border:1px solid #b9b9b9;"></div>
  <div class="a" style="left:1418.600px;top:710.400px;width:15px;height:13.600px;background:#fff;border:1px solid #b9b9b9;"></div>
  <svg style="left:1418px;top:156px" width="16" height="600" viewBox="0 0 16 600" fill="#444">
    <path d="M4.600 10.200l3.600 -4l3.600 4z"/><path d="M4.800 559.600h6.800l-3.400 3.800z"/>
    <path d="M4 576.400l4.200 -4.600l4.200 4.600zM4 581.600l4.200 -4.600l4.200 4.600z" fill="#666"/><path d="M4 585.400h8.400l-4.200 4.600zM4 590.600h8.400l-4.200 4.600z" fill="#666"/>
  </svg>

  <!-- ===== OfficePLUS side pane ===== -->
  <div class="a" style="left:1435.600px;top:155px;width:75px;height:700px;background:#f1f1f1;"></div>
  <div class="a" style="left:1441px;top:196px;width:62px;height:660px;background:#f6f6f6;"></div>
  <svg style="left:1448px;top:168px" width="50" height="16" viewBox="0 0 50 16" fill="none" stroke="#444" stroke-width="1.200"><path d="M1.600 5l5.600 5.600l5.600 -5.600"/><path d="M34.600 3l10 10M44.600 3l-10 10"/></svg>
  <!-- mascot -->
  <svg style="left:1434px;top:206px" width="76" height="76" viewBox="0 0 76 76">
    <defs><radialGradient id="ms" cx="45%" cy="35%" r="70%"><stop offset="0" stop-color="#ffffff"/><stop offset="0.550" stop-color="#e9edff"/><stop offset="0.850" stop-color="#aab8f5"/><stop offset="1" stop-color="#7f93ee"/></radialGradient></defs>
    <ellipse cx="7.500" cy="48" rx="5" ry="9" fill="#8fa6f2" opacity=".75"/><ellipse cx="68" cy="48" rx="5" ry="9" fill="#8fa6f2" opacity=".75"/>
    <ellipse cx="37.500" cy="46.500" rx="30.500" ry="25" fill="url(#ms)"/>
    <ellipse cx="41" cy="55" rx="10" ry="9" fill="#b9c6fb" opacity=".6"/>
    <path d="M26 9.500q6 -1 8.500 4.500q4 -6 11 -4.500q-6 2.500 -6.500 9q-1.500 5 -6.500 5.500q3.500 -6 -0.500 -10q-2.500 -3 -6 -4.500z" fill="#f46a1f"/><path d="M33 14q4 2 3.500 8" stroke="#ffb15a" stroke-width="1.200" fill="none"/>
    <ellipse cx="26.300" cy="46.600" rx="3" ry="5" fill="#3a2317"/><ellipse cx="45.600" cy="46.600" rx="3" ry="5" fill="#3a2317"/><ellipse cx="26.300" cy="44" rx="2.300" ry="2.200" fill="#e8862d"/><ellipse cx="45.600" cy="44" rx="2.300" ry="2.200" fill="#e8862d" opacity=".6"/>
  </svg>
  <div class="pl" style="top:289.2px;">模板</div>
  <svg style="left:1458px;top:326px" width="28" height="440" viewBox="0 0 28 440" fill="none" stroke="#5a5a5a" stroke-width="1.250">
    <rect x="4.200" y="3.600" width="18.600" height="16.400" rx="2.600"/><rect x="7.600" y="7" width="11.800" height="3.800" rx="0.800"/><rect x="7.600" y="13" width="6" height="4" rx="0.800"/><path d="M15.800 13.400h3.800M15.800 16.400h3.800"/>
    <path d="M8.600 62.400l4.200 7.400h-8.400z"/><path d="M19 61.400l4.200 4.400l-4.200 4.400l-4.200 -4.400z"/><circle cx="8.600" cy="76.600" r="3.900"/><rect x="15.200" y="72.800" width="7.600" height="7.600" rx="1.400"/>
    <rect x="10" y="121" width="7.600" height="5.600" rx="1.200"/><path d="M13.800 126.600v3.600M6.400 133.400v-3.200h14.800v3.200"/><rect x="3.800" y="133.400" width="5.400" height="5" rx="1.200"/><rect x="11.100" y="133.400" width="5.400" height="5" rx="1.200"/><rect x="18.400" y="133.400" width="5.400" height="5" rx="1.200"/>
    <path d="M17.800 185.200a6.400 6.400 0 1 0 -7.600 6.200"/><rect x="10.600" y="186.800" width="11.800" height="11.400" rx="2.600"/>
    <path d="M13.400 246.600q-1.400 -6.400 -6.400 -7.400q-3.600 0.600 -2.400 4.400q1 3.400 4.400 5q-3.600 1.600 -3 5q1.400 3 4.600 1.400q2.200 -1.600 2.800 -4.200zM13.400 246.600q1.400 -6.400 6.400 -7.400q3.600 0.600 2.400 4.400q-1 3.400 -4.400 5q3.600 1.600 3 5q-1.400 3 -4.600 1.400q-2.200 -1.600 -2.800 -4.200z"/><path d="M13.400 241v13.600"/>
    <path d="M7.400 300.600h13.200a2.600 2.600 0 0 1 2.600 2.600v2.400M23.200 309v5.600a2.600 2.600 0 0 1 -2.600 2.600h-2M14 317.200h-6.600a2.600 2.600 0 0 1 -2.600 -2.600v-5M4.800 306v-2.800a2.600 2.600 0 0 1 2.600 -2.600"/><rect x="2.600" y="297.800" width="5" height="4.600" rx="1" fill="#f6f6f6"/><rect x="20.600" y="315" width="5" height="4.600" rx="1" fill="#f6f6f6"/><path d="M9.400 306.400h9.400M9.400 310.400h9.400"/>
    <rect x="4.200" y="357.600" width="18.800" height="16.400" rx="2.800"/><circle cx="17.800" cy="362.600" r="1.400" fill="#5a5a5a"/><path d="M4.400 370.400q4 -5 7.600 -1.600q2.600 2.400 5 0.400q2.800 -2 5.800 0.800"/>
    <path d="M13.600 421.600v-7.400a7.600 7.600 0 1 0 7.400 9.200z"/><path d="M16.200 412.600a7.600 7.600 0 0 1 6.600 6.600l-6.600 1z"/>
  </svg>
  <div class="pl" style="top:357.4px;">单页</div>
  <div class="pl" style="top:416.4px;">图标</div>
  <div class="pl" style="top:475.4px;">关系图</div>
  <div class="pl" style="top:534.4px;">形状</div>
  <div class="pl" style="top:593.4px;">插画</div>
  <div class="pl" style="top:652.4px;">文本框</div>
  <div class="pl" style="top:711.4px;">图片</div>
  <svg style="left:1466px;top:757px" width="12" height="8" viewBox="0 0 12 8"><path d="M2 1.600h8l-4 4.400z" fill="#444"/></svg>

  <!-- ===== status bar ===== -->
  <div class="a" style="left:0;top:777.700px;width:1510px;height:25.800px;background:#e2e2e2;border-top:1px solid #cfcfcf;"></div>
  <div class="t" style="left:12px;top:786.800px;font-size:11.400px;color:#555;">幻灯片 第 5 张，共 7 张</div>
  <div class="t" style="left:184px;top:786.800px;font-size:11.400px;color:#555;">简体中文(中国大陆)</div>
  <div class="t" style="left:312px;top:786.800px;font-size:11.400px;color:#555;">辅助功能: 一切就绪</div>
  <svg style="left:154px;top:785px" width="160" height="14" viewBox="0 0 160 14" fill="none" stroke="#666" stroke-width="1"><rect x="1" y="2" width="10" height="9"/><path d="M3 5h6M3 8h4"/><circle cx="150" cy="4" r="1.600"/><path d="M145.600 7h9M150 7v3M147.600 13l2.400 -3l2.400 3"/></svg>
  <div class="t" style="left:1051px;top:786.800px;font-size:11.400px;color:#555;">备注</div>
  <div class="t" style="left:1110px;top:786.800px;font-size:11.400px;color:#555;">批注</div>
  <svg style="left:1034px;top:784px" width="90" height="16" viewBox="0 0 90 16" fill="none" stroke="#555" stroke-width="1.100"><path d="M2 11h10M2 8h10M7 2l3 3.600h-6z" fill="#555"/><path d="M61 2.400h12v8h-6l-3 3v-3h-3z" fill="#444" stroke="none"/></svg>
  <div class="a" style="left:1155.600px;top:778.600px;width:38px;height:24.600px;background:#cbcbcb;"></div>
  <svg style="left:1160px;top:783px" width="340" height="18" viewBox="0 0 340 18" fill="none" stroke="#666" stroke-width="1">
    <rect x="8.600" y="3.600" width="12" height="11"/><path d="M11.400 3.600v11M11.400 6.400h9.200"/>
    <rect x="46.600" y="3.600" width="4.600" height="4"/><rect x="53.600" y="3.600" width="4.600" height="4"/><rect x="46.600" y="10.200" width="4.600" height="4"/><rect x="53.600" y="10.200" width="4.600" height="4"/>
    <path d="M85.600 4h5.400v10h-5.400zM91 4h5.400v10h-5.400zM87 6.600h2.600M87 9h2.600M92.400 6.600h2.600M92.400 9h2.600"/>
    <path d="M124 4h12M125.400 4.400v6h9.200v-6M130 10.400v3M127.600 13.600h4.800"/>
    <path d="M158 9h6" stroke-width="1.200"/><path d="M171 9h96"/><path d="M219.600 7v4"/><rect x="209.800" y="3.800" width="3.600" height="10.400" fill="#444" stroke="none"/><path d="M272 9h7M275.500 5.500v7" stroke-width="1.200"/>
    <rect x="332" y="4" width="9" height="9"/><path d="M334.400 6.400l4.200 4.200M338.600 6.400l-4.200 4.200" stroke-width=".8"/>
  </svg>
  <div class="t" style="left:1453px;top:786.400px;font-size:11.600px;color:#555;">85%</div>

  <!-- ===== windows taskbar ===== -->
  <div class="a" style="left:0;top:803.500px;width:1510px;height:46px;background:linear-gradient(90deg,#e6e2e6 0%,#ecddd9 14%,#ebdbd7 28%,#e6dfe2 36%,#e3e0e6 48%,#e9ddd9 53%,#e2e0e6 60%,#dfe1e8 100%);"></div>
  <svg style="left:22px;top:806px" width="32" height="36" viewBox="0 0 32 36"><path d="M5 24q10 8 20 -6q0 14 -11 15q-7 0 -9 -9z" fill="#f2a23b"/><circle cx="15.600" cy="9.400" r="7" fill="#d9352b"/></svg>
  <div class="t" style="left:34.600px;top:810.600px;font-size:10px;font-weight:bold;"><span style="color:#fff;">1</span></div>
  <div class="t" style="left:50px;top:810px;font-size:11.400px;color:#555;">6°C</div>
  <div class="t" style="left:50px;top:826px;font-size:11.400px;color:#666;">晴朗</div>
  <svg style="left:481px;top:813px" width="26" height="26" viewBox="0 0 26 26" fill="#1d6fd1"><rect x="1.600" y="1.600" width="10.400" height="10.400" rx="1"/><rect x="13.400" y="1.600" width="10.400" height="10.400" rx="1"/><rect x="1.600" y="13.400" width="10.400" height="10.400" rx="1"/><rect x="13.400" y="13.400" width="10.400" height="10.400" rx="1"/></svg>
  <div class="a" style="left:519px;top:810.600px;width:214px;height:31px;border-radius:15.500px;background:#f2eff2;"></div>
  <svg style="left:528px;top:817px" width="18" height="18" viewBox="0 0 18 18" fill="none" stroke="#333" stroke-width="1.500"><circle cx="7.600" cy="7.600" r="5"/><path d="M11.400 11.400l4.600 4.600"/></svg>
  <div class="t" style="left:554px;top:818.600px;font-size:14.600px;color:#777;">搜索</div>
  <!-- pinned apps -->
  <div class="a" style="left:746.600px;top:817px;width:17.400px;height:18px;border-radius:3px;background:#3c3c42;"></div>
  <div class="a" style="left:789px;top:812px;width:24px;height:24px;border-radius:50%;background:conic-gradient(#2f86e0,#38b8c8,#2f6fd0,#2f86e0);"></div>
  <div class="a" style="left:832.500px;top:816px;width:24px;height:19px;border-radius:3px;background:#f0b73c;"></div><div class="a" style="left:834.500px;top:825px;width:20px;height:10px;border-radius:2px;background:#3a8ee6;"></div>
  <div class="a" style="left:869.700px;top:806px;width:36.800px;height:40px;border-radius:5px;background:#ebe6ea;"></div><div class="a" style="left:878px;top:813px;width:21.500px;height:21.500px;border-radius:50%;background:#d4502c;"></div><div class="a" style="left:880px;top:841.600px;width:16px;height:3px;border-radius:2px;background:#2f79d6;"></div>
  <div class="a" style="left:912px;top:806px;width:37.700px;height:41px;border-radius:5px;background:#f4b5a6;"></div><div class="a" style="left:919.500px;top:813px;width:23.500px;height:22px;border-radius:5px;background:#12c878;"></div><div class="a" style="left:928px;top:820px;width:6.500px;height:6.500px;border-radius:2px;background:#f4f4f4;"></div><div class="a" style="left:916.600px;top:841.600px;width:29.400px;height:3px;border-radius:2px;background:#c23a2e;"></div>
  <div class="a" style="left:963.500px;top:812px;width:22px;height:22px;border-radius:50%;background:radial-gradient(circle at 50% 40%,#f2d9b8 0 35%,#c9823f 36% 70%,#7a5a3a 71%);"></div><div class="a" style="left:971px;top:842px;width:5.700px;height:3px;border-radius:2px;background:#8f8f8f;"></div>
  <div class="a" style="left:1006.600px;top:812px;width:22.800px;height:21px;border-radius:4px;background:#2d7ff0;"></div><div class="a" style="left:1014.800px;top:842px;width:5.400px;height:3px;border-radius:2px;background:#8f8f8f;"></div>
  <!-- tray -->
  <svg style="left:1264px;top:812px" width="240" height="28" viewBox="0 0 240 28" fill="none" stroke="#444" stroke-width="1.300">
    <rect x="7.600" y="3.600" width="6" height="11.400" rx="3" stroke="#2f6fd1"/><path d="M5 11.600a5.600 5.600 0 0 0 11.200 0M10.600 17.600v3.600" stroke="#2f6fd1"/>
    <path d="M66.600 11.400a10.600 10.600 0 0 1 15 0M69 14.200a7.200 7.200 0 0 1 10.200 0M71.600 17a3.600 3.600 0 0 1 5 0"/><circle cx="74.100" cy="19.400" r="1" fill="#444"/>
    <path d="M89.600 11.600h3l4 -3.400v11.600l-4 -3.400h-3z"/><path d="M99.600 10.600a5 5 0 0 1 0 7"/>
    <rect x="112" y="9" width="19" height="10.400" rx="2.600" fill="#2f5a3a" stroke="#333"/><path d="M132.600 12v4.400"/><path d="M122 4.600l-3 5h5l-3 5" stroke="#2ea84f" stroke-width="1.400"/>
    <path d="M213 20.600h12l-1.600 -2.600v-5a4.400 4.400 0 0 0 -8.800 0v5zM217.600 22.600a1.600 1.600 0 0 0 3 0"/>
  </svg>
  <div class="t" style="left:1298px;top:817.600px;font-size:15.600px;color:#333;">英</div>
  <div class="t" style="left:1439px;top:811.200px;font-size:11.400px;color:#444;">20:15</div>
  <div class="t" style="left:1413.600px;top:827.400px;font-size:11.400px;color:#444;">2026/3/16</div>
</div><!-- /#ppt -->
<!-- ===== RIGHT PANEL : participant tiles ===== -->
<div class="tile" style="top:97px;height:280px;"></div>
<div class="tile" style="top:382px;height:279px;"></div>
<div class="tile" style="top:666px;height:280px;"></div>

<!-- tile 1 : 可爱 -->
<div class="a" style="left:1749.3px;top:174.2px;width:97.4px;height:97.4px;border-radius:50%;background:#006fff;"></div>
<div class="t" style="left:1761.5px;top:207.8px;font-size:35.5px;color:#fff;letter-spacing:1.2px;">可爱</div>
<svg style="left:1560px;top:328px" width="40" height="44" viewBox="1560 328 40 44">
  <rect x="1572.2" y="333.4" width="15" height="24.2" rx="7.5" fill="#fff"/>
  <path d="M1566.5 350.6a13.1 13.1 0 0 0 26.2 0" fill="none" stroke="#fff" stroke-width="3.2"/>
  <rect x="1577.9" y="362.5" width="3.5" height="5.2" fill="#fff"/>
  <path d="M1568.6 366.4L1595.1 339.8" stroke="#2c3033" stroke-width="3.4"/>
  <path d="M1566.1 364.4L1593.1 337.3" stroke="#f04d43" stroke-width="3.1"/>
</svg>
<div class="nm" style="left:1604.4px;top:339.6px;font-size:24.5px;letter-spacing:1.2px;">可爱</div>

<!-- tile 2 : 金数2102王晓雨 -->
<svg style="left:1749px;top:458px" width="98" height="98" viewBox="-49 -49 98 98">
  <defs>
    <clipPath id="av2"><circle cx="0" cy="0" r="48.7"/></clipPath>
    <filter id="b2" x="-10%" y="-10%" width="120%" height="120%"><feGaussianBlur stdDeviation="0.6"/></filter>
    <radialGradient id="fur" cx="50%" cy="45%" r="60%"><stop offset="0" stop-color="#efe9df"/><stop offset="0.8" stop-color="#e1d8cb"/><stop offset="1" stop-color="#cfc3b3"/></radialGradient>
    <radialGradient id="snow" cx="45%" cy="40%" r="65%"><stop offset="0" stop-color="#efeeec"/><stop offset="0.8" stop-color="#e1e0de"/><stop offset="1" stop-color="#c9c6c2"/></radialGradient>
    <linearGradient id="stone" x1="0" y1="0" x2="0" y2="1"><stop offset="0" stop-color="#8a735f"/><stop offset="0.3" stop-color="#7e6a58"/><stop offset="0.6" stop-color="#736352"/><stop offset="1" stop-color="#6c5c4c"/></linearGradient>
  </defs>
  <g clip-path="url(#av2)"><g filter="url(#b2)">
    <rect x="-60" y="-60" width="120" height="120" fill="url(#stone)"/>
    <rect x="-49" y="-30" width="98" height="4" fill="#8f8372" opacity="0.7"/>
    <rect x="-49" y="-18" width="98" height="3" fill="#5e5044" opacity="0.6"/>
    <rect x="-49" y="-8" width="98" height="3" fill="#8a7c6b" opacity="0.6"/>
    <rect x="-14" y="-49" width="5" height="22" fill="#4e4339"/>
    <rect x="-9" y="-49" width="30" height="20" fill="#94806e" opacity="0.8"/>
    <path d="M-49 6 L-20 8 L-20 49 L-49 49z" fill="#d2dcf0"/>
    <path d="M25 20 L49 14 L49 49 L25 49z" fill="#d6dded"/>
    <ellipse cx="-14" cy="26" rx="17" ry="25" fill="url(#fur)"/>
    <ellipse cx="-18" cy="-9" rx="21" ry="17.5" fill="url(#fur)"/>
    <ellipse cx="-34" cy="-1" rx="6" ry="9" fill="#e3dace"/>
    <ellipse cx="0" cy="-4" rx="5" ry="8" fill="#e6ddd1"/>
    <circle cx="-19.2" cy="-6.3" r="2.3" fill="#1d1917"/>
    <ellipse cx="21.5" cy="28" rx="19.5" ry="18.5" fill="url(#snow)"/>
    <ellipse cx="23" cy="-3" rx="16" ry="14" fill="url(#snow)"/>
    <path d="M14.5 -7h7M33 -7l5 1" stroke="#8b847c" stroke-width="0.8" fill="none"/>
    <path d="M25.5 0.5l5 -0.5l-2.5 4z" fill="#c9b8a2" stroke="#9a8a78" stroke-width="0.5"/>
  </g></g>
</svg>
<svg style="left:1560px;top:612px" width="40" height="46" viewBox="1560 612 40 46">
  <rect x="1572.9" y="617.8" width="14.4" height="24.4" rx="7.2" fill="#fff"/>
  <path d="M1566.6 634.2a13.3 13.3 0 0 0 26.6 0" fill="none" stroke="#fff" stroke-width="3.3"/>
  <rect x="1578.2" y="647" width="3.5" height="4.8" fill="#fff"/>
</svg>
<div class="nm" style="left:1604.4px;top:623.4px;font-size:24.5px;letter-spacing:1.2px;">金数<span style="font-size:26.4px;letter-spacing:1.75px;">2<span style="margin:0 -2.4px 0 -1.6px">1</span>02</span>王晓雨</div>

<!-- tile 3 : 数学2204王紫惠 -->
<svg style="left:1749px;top:742.6px" width="98" height="98" viewBox="-49 -49 98 98">
  <defs>
    <clipPath id="av3"><circle cx="0" cy="0" r="48.7"/></clipPath>
    <filter id="b3" x="-10%" y="-10%" width="120%" height="120%"><feGaussianBlur stdDeviation="1.0"/></filter>
    <radialGradient id="face" cx="50%" cy="45%" r="60%"><stop offset="0" stop-color="#f0ddd3"/><stop offset="0.75" stop-color="#e6cfc3"/><stop offset="1" stop-color="#b9a196"/></radialGradient>
    <radialGradient id="hair" cx="50%" cy="50%" r="55%"><stop offset="0" stop-color="#1d1a19"/><stop offset="0.8" stop-color="#2b2725"/><stop offset="1" stop-color="#4a4542"/></radialGradient>
  </defs>
  <g clip-path="url(#av3)"><g filter="url(#b3)">
    <rect x="-60" y="-60" width="120" height="120" fill="#6f6c69"/>
    <path d="M-49 -15 Q-40 -10 -38 20 L-49 25z" fill="#3b3d40"/>
    <path d="M49 -20 L30 -10 L34 22 L49 18z" fill="#9b9c9a"/>
    <path d="M-40 -30 Q-10 -55 30 -42 Q48 -20 40 10 Q20 30 0 20 L-5 -30z" fill="url(#hair)"/>
    <path d="M-44 -24 Q-22 -54 14 -46 Q4 -20 -12 -16 Q-30 -20 -42 -4z" fill="#7d756e"/>
    <ellipse cx="-14" cy="-4" rx="21" ry="27" fill="url(#face)"/>
    <path d="M-5 -38 Q12 -30 10 -8 Q6 10 2 22 Q-2 0 -2 -14 Q-3 -28 -12 -34z" fill="#37312e"/>
    <ellipse cx="22" cy="6" rx="20" ry="22" fill="url(#hair)"/>
    <path d="M-49 18 Q-30 10 -22 -8 L-14 -6 Q-16 14 -22 30 L-40 49 L-49 49z" fill="#dcc8bc"/>
    <path d="M-30 49 Q-20 25 -8 22 Q10 28 20 26 Q35 22 44 26 L40 49z" fill="#ddd5cf"/>
    <path d="M10 24 Q25 16 42 22 L36 36 Q20 28 8 32z" fill="#8c7d74"/>
    <path d="M-22 9 q6 -3 11 1 q-6 4 -11 -1z" fill="#d9625f"/>
    <path d="M-10 -9 q5 -3 9 0" stroke="#4a3a36" stroke-width="1.6" fill="none"/>
    <path d="M-31 -10 q4 2 8 0" stroke="#5a4640" stroke-width="1.3" fill="none"/>
    <path d="M10 -30 l4 -8 l5 -4 l4 4 l-2 7 l-6 6z" fill="#ddd8cc"/>
  </g></g>
</svg>
<div class="a" style="left:1548px;top:892.5px;width:53.5px;height:53.5px;background:#ff8116;"></div>
<svg style="left:1548px;top:892px" width="54" height="54" viewBox="1548 892 54 54">
  <circle cx="1574.7" cy="908.8" r="8.2" fill="#fff"/>
  <path d="M1555.8 937 Q1556.5 924.5 1568.5 919.6 L1574.7 925.3 L1580.9 919.6 Q1593 924.5 1593.8 937z" fill="#fff"/>
</svg>
<svg style="left:1612px;top:898px" width="40" height="44" viewBox="1612 898 40 44">
  <rect x="1626.6" y="902.6" width="15" height="24.2" rx="7.5" fill="#fff"/>
  <path d="M1620.9 919.8a13.1 13.1 0 0 0 26.2 0" fill="none" stroke="#fff" stroke-width="3.2"/>
  <rect x="1632.3" y="931.7" width="3.5" height="5" fill="#fff"/>
  <path d="M1623 935.6L1649.5 909" stroke="#2c3033" stroke-width="3.4"/>
  <path d="M1620.5 933.6L1647.5 906.5" stroke="#f04d43" stroke-width="3.1"/>
</svg>
<div class="nm" style="left:1657.6px;top:908.2px;font-size:24.5px;letter-spacing:1.2px;">数学<span style="font-size:26.4px;letter-spacing:1.75px;">2204</span>王紫惠</div>
<!-- ===== OVERLAYS on shared screen ===== -->
<!-- laser pointer dot -->
<div class="a" style="left:17px;top:189.400px;width:11.200px;height:11.200px;border-radius:50%;background:#f5a21f;"></div>
<!-- zoom-in overlay -->
<div class="a" style="left:1441.300px;top:97px;width:106.700px;height:106.200px;background:rgba(29,30,32,0.690);"></div>
<svg style="left:1460px;top:118px" width="64" height="62" viewBox="1460 118 64 62" fill="none" stroke="#fff">
  <circle cx="1487.600" cy="143.900" r="19.100" stroke-width="5.600"/>
  <path d="M1502 158.600l12.400 11.400" stroke-width="7.400" stroke-linecap="round"/>
  <path d="M1480.800 143.900h13.600M1487.600 137.100v13.600" stroke-width="5.400"/>
</svg>
<!-- expand handle -->
<div class="a" style="left:1490.200px;top:426.600px;width:57.800px;height:189.200px;border-radius:23px 0 0 23px;background:rgba(29,29,29,0.700);"></div>
<svg style="left:1512px;top:504px" width="24" height="36" viewBox="1512 504 24 36"><path d="M1515.400 506.400v30l18.200 -15z" fill="#fff"/></svg>
<!-- caption toggle round button -->
<div class="a" style="left:114px;top:662px;width:109.400px;height:109.200px;border-radius:50%;background:rgba(72,73,75,0.800);"></div>
<svg style="left:136px;top:686px" width="66" height="62" viewBox="136 686 66 62" fill="none" stroke="#dddddd" stroke-width="4.600" stroke-linecap="butt">
  <path d="M162 733.700h-10.300a8 8 0 0 1 -8 -8v-23.300a8 8 0 0 1 8 -8h28.600a8 8 0 0 1 8 8v19.600"/>
  <path d="M157.600 708.500h0.200M165.800 708.500h11.200M154.800 719.500h0.200M163 719.500h6.200" stroke-width="5.400" stroke-linecap="round"/>
  <rect x="165.600" y="726.400" width="30" height="16.400" rx="8.200" fill="#07c160" stroke="none"/>
  <circle cx="186.300" cy="734.300" r="9.700" fill="#fff" stroke="none"/>
</svg>
<!-- bottom caption bar -->
<div class="a" style="left:0;top:851.400px;width:1529px;height:94.600px;background:rgba(29,31,33,0.687);"></div>
<svg style="left:96px;top:856px" width="36" height="42" viewBox="96 856 36 42">
  <rect x="106.400" y="860.400" width="15.600" height="25" rx="7.800" fill="#fff"/>
  <path d="M100.600 876.400a13.600 13.600 0 0 0 27.200 0" fill="none" stroke="#fff" stroke-width="3.300"/>
  <rect x="112.400" y="890" width="3.600" height="5" fill="#fff"/>
</svg>
<div class="t" style="left:138.400px;top:866.400px;font-size:24.700px;letter-spacing:0.900px;color:#fff;">金数<span style="font-size:26.400px;letter-spacing:1.700px;">2<span style="margin:0 -2.400px 0 -1.600px">1</span>02</span>王晓雨的屏幕共享</div>
<!-- home indicator -->
<div class="a" style="left:761px;top:914.400px;width:526.600px;height:12.600px;border-radius:6.300px;background:linear-gradient(90deg,#fff 0%,#fff 58%,#eeeeee 60%,#ececec 89%,#fafafa 91%,#fff 100%);"></div>

<!-- ===== FLOATING WHITE PILL (assistant logo) ===== -->
<div class="a" style="left:1781px;top:-40px;width:121px;height:166px;border-radius:0 0 60.500px 60.500px;background:#fff;box-shadow:0 0 70px 30px rgba(0,0,0,0.100);"></div>
<svg style="left:1800px;top:22px" width="84" height="84" viewBox="1800 22 84 84">
  <circle cx="1842" cy="62.900" r="34.200" fill="#fff" stroke="#cfcfcf" stroke-width="0.600"/>
  <polygon points="1828,38.300 1813.400,62.900 1827.700,86.900 1841,62.900" fill="#33a6ff"/>
  <polygon points="1828,38.300 1856.600,38.300 1869.600,62 1855,62 1847.500,48.900 1834,48.900" fill="#1558e0"/>
  <polygon points="1869.600,62 1855.500,86.500 1848.300,74 1855,62" fill="#0b5cf2"/>
  <polygon points="1841,62.900 1854.600,62.900 1841,86.900 1834.300,74.900" fill="#1a78f2"/>
</svg>
</body>
</html>
